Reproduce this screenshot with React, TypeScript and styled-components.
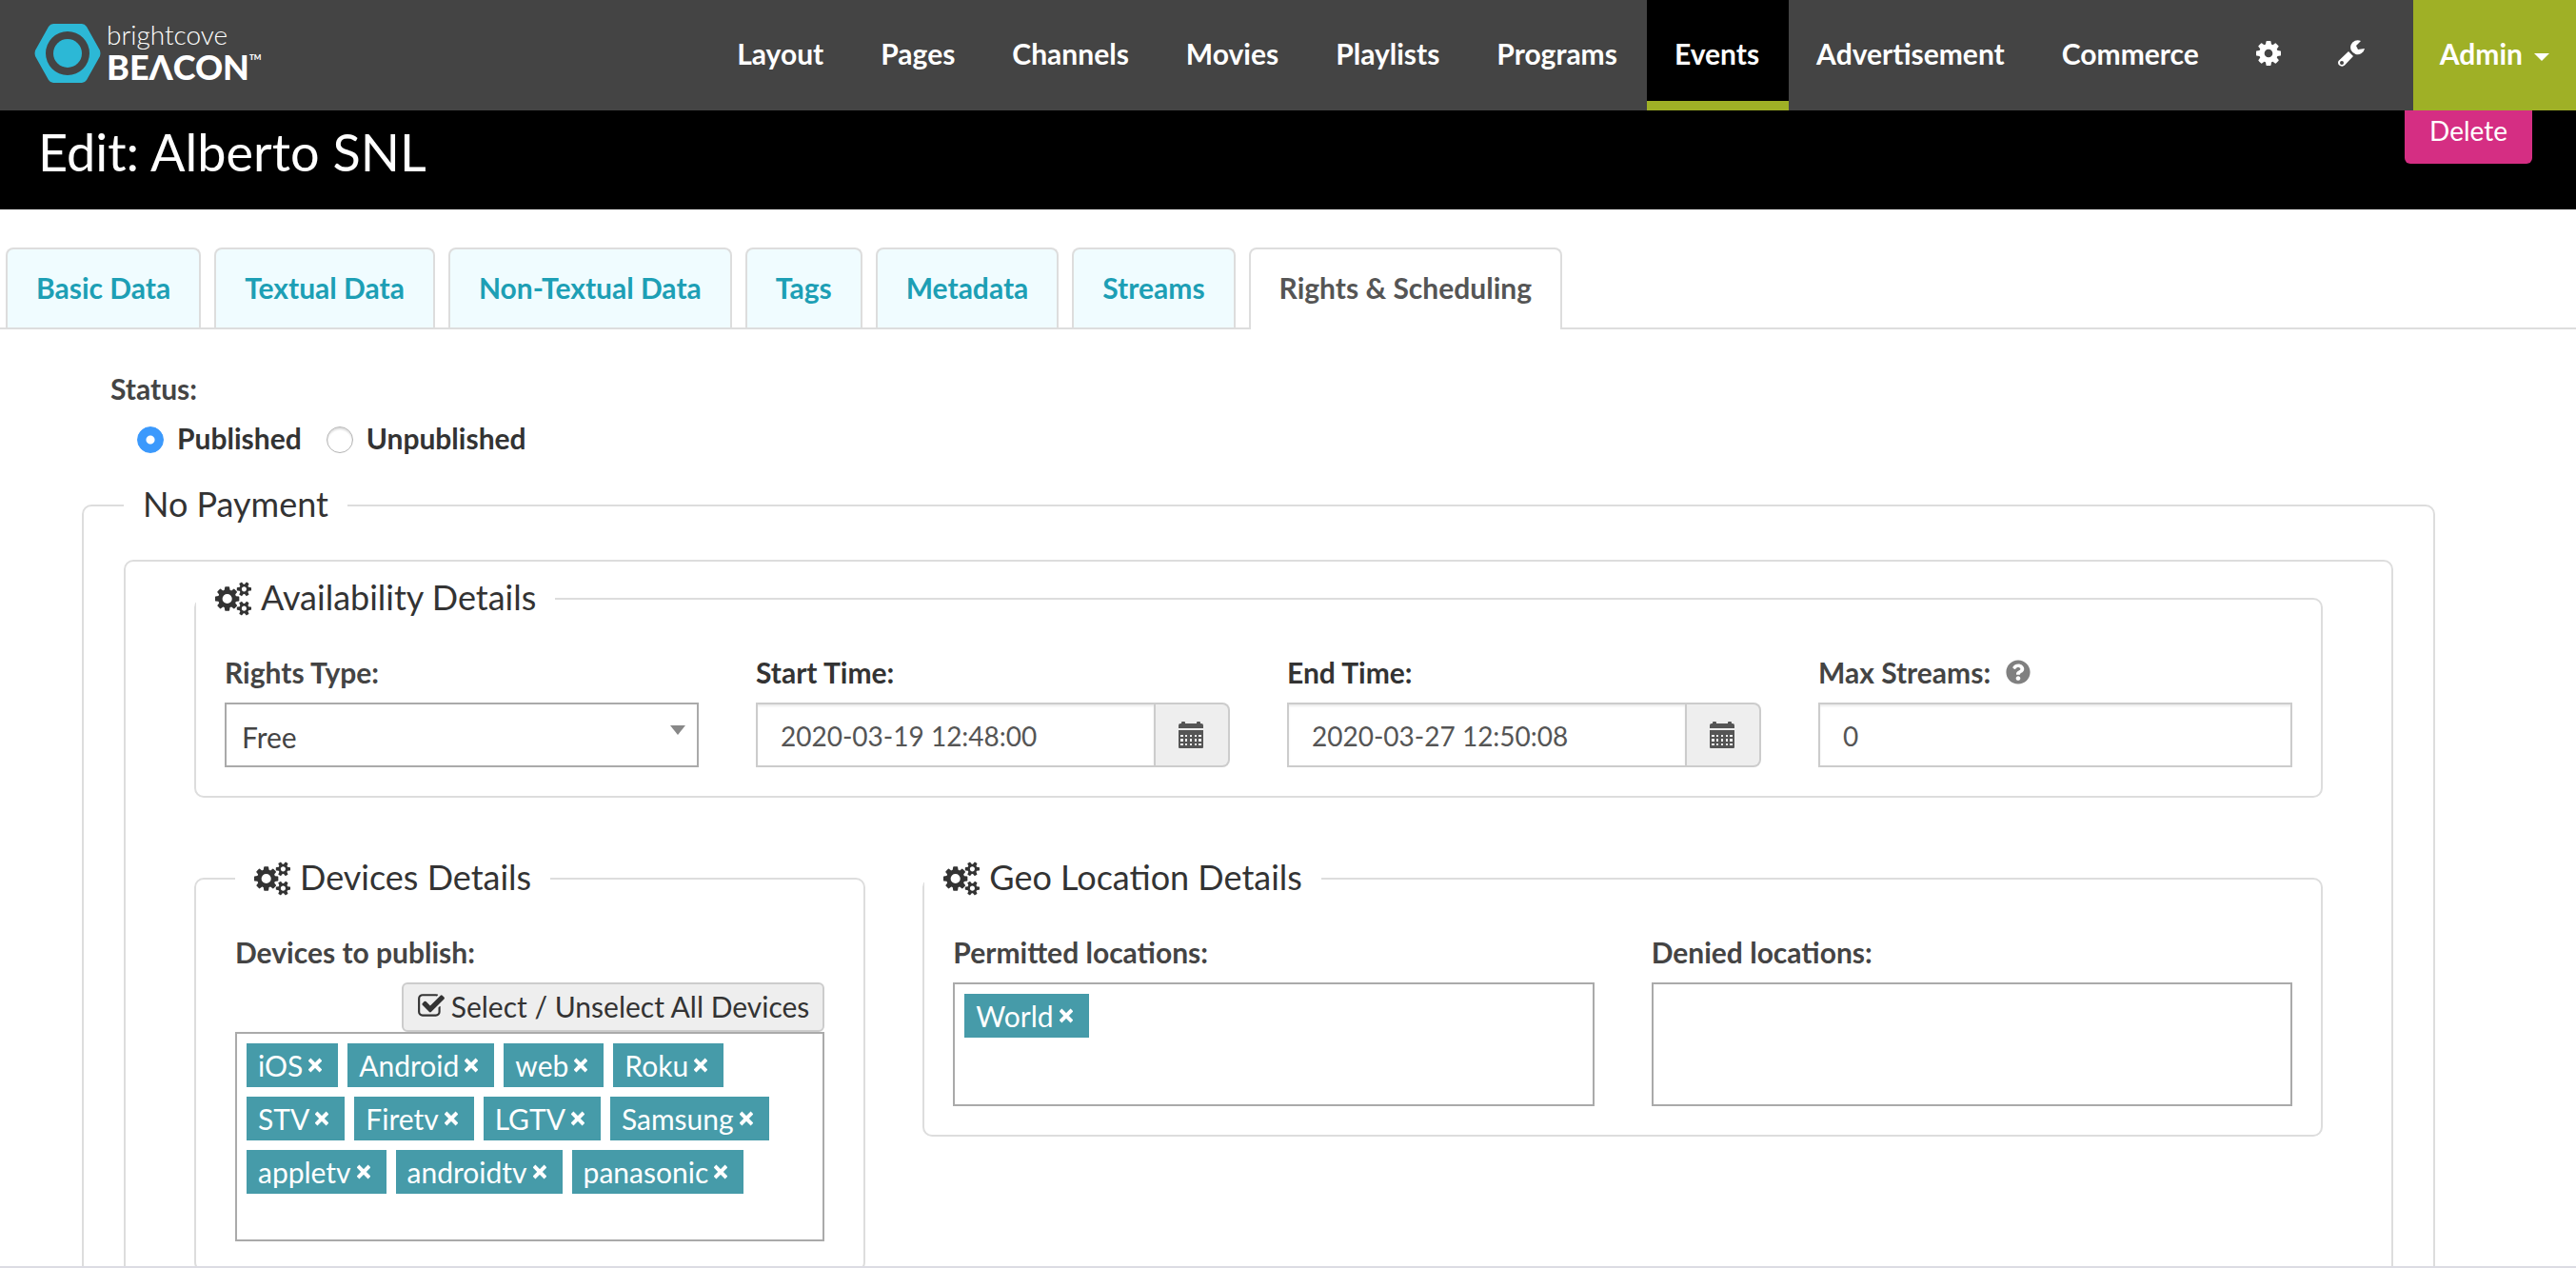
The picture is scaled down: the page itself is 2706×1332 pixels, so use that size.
import React, { useState } from "react";
import styled, { createGlobalStyle } from "styled-components";
import { FaQuestionCircle } from "react-icons/fa";

const GlobalStyle = createGlobalStyle`
  *, *::before, *::after { box-sizing: border-box; }
  body {
    margin: 0;
    background: #fff;
    color: #444;
    font-family: Lato, "Open Sans", sans-serif;
    font-size: 30px;
    line-height: 40px;
  }
  button, input, select { font: inherit; color: inherit; }
`;

const Shell = styled.div`
  display: flex;
  flex-direction: column;
  height: 100vh;
  border-bottom: 2px solid #dcdce3;
`;

const Header = styled.header`
  display: flex;
  align-items: stretch;
  justify-content: space-between;
  flex: none;
  height: 116px;
  background: #444;
  color: #fff;
`;

const Brand = styled.a`
  display: flex;
  align-items: center;
  align-self: flex-start;
  gap: 6px;
  padding: 20px 0 0 36px;
  color: #fff;
  text-decoration: none;
`;

const BrandText = styled.span`
  display: flex;
  flex-direction: column;
  padding-bottom: 4px;
`;

const BrandTop = styled.span`
  font-size: 28px;
  font-weight: 300;
  line-height: 32px;
`;

const BrandName = styled.span`
  display: flex;
  font-size: 36px;
  font-weight: 900;
  line-height: 36px;
`;

const TradeMark = styled.span`
  font-size: 8px;
  line-height: 16px;
`;

const Nav = styled.nav`
  display: flex;
`;

const NavLink = styled.a<{ $active?: boolean }>`
  display: flex;
  align-items: center;
  padding: 0 31px 0 29px;
  border-bottom: 10px solid ${(p) => (p.$active ? "#9fb026" : "transparent")};
  border-top: 6px solid transparent;
  background: ${(p) => (p.$active ? "#000" : "transparent")};
  color: #fff;
  font-weight: 700;
  text-decoration: none;
`;

const AdminButton = styled.button`
  display: flex;
  align-items: center;
  gap: 12px;
  margin-left: 20px;
  padding: 0 28px 4px;
  border: 0;
  background: #9fb026;
  color: #fff;
  font-weight: 700;
`;

const Caret = styled.span`
  margin-top: 8px;
  border: 8px solid transparent;
  border-top-color: currentColor;
  border-bottom: 0;
`;

const Scroller = styled.div`
  flex: 1;
  min-height: 0;
  overflow-x: hidden;
  overflow-y: auto;
  scrollbar-width: none;
`;

const TitleBar = styled.div`
  display: flex;
  justify-content: space-between;
  align-items: flex-start;
  height: 104px;
  padding: 0 46px 0 40px;
  background: #000;
  color: #fff;
`;

const Title = styled.h1`
  margin: 0;
  padding-top: 12px;
  font-size: 54px;
  font-weight: 400;
  line-height: 64px;
`;

const DeleteButton = styled.button`
  padding: 0 26px 14px;
  border: 0;
  border-radius: 0 0 6px 6px;
  background: #d52e83;
  color: #fff;
  font-size: 28px;
  line-height: 42px;
`;

const Tabs = styled.div`
  display: flex;
  gap: 14px;
  margin-top: 40px;
  padding: 0 6px;
  border-bottom: 2px solid #ddd;
`;

const Tab = styled.button<{ $active?: boolean }>`
  height: ${(p) => (p.$active ? 86 : 84)}px;
  margin-bottom: ${(p) => (p.$active ? -2 : 0)}px;
  padding: 0 30px ${(p) => (p.$active ? 4 : 2)}px;
  border: 2px solid #ddd;
  border-bottom: 0;
  border-radius: 8px 8px 0 0;
  background: ${(p) => (p.$active ? "#fff" : "#f0fcff")};
  color: ${(p) => (p.$active ? "#555" : "#1d9fb5")};
  font-weight: 700;
`;

const Form = styled.form`
  padding: 42px 148px 60px 86px;
`;

const Status = styled.div`
  padding-left: 30px;
`;

const StatusLabel = styled.div`
  font-weight: 700;
`;

const RadioRow = styled.div`
  display: flex;
  gap: 26px;
  padding: 14px 0 0 28px;
`;

const RadioLabel = styled.label`
  display: flex;
  align-items: center;
  gap: 14px;
  height: 40px;
  color: #333;
  font-weight: 700;
`;

const RadioText = styled.span`
  padding-bottom: 4px;
`;

const Radio = styled.input`
  appearance: none;
  width: 28px;
  height: 28px;
  margin: 0;
  border: 1px solid #b4b4b4;
  border-radius: 50%;
  background: #fff;
  box-shadow: inset 0 2px 2px #ddd;

  &:checked {
    border-color: #3b99fc;
    background: radial-gradient(circle, #fff 0 4px, #3b99fc 5px);
    box-shadow: none;
  }
`;

const Group = styled.fieldset<{ $pad: number }>`
  min-width: 0;
  margin: 0;
  padding: 0 ${(p) => p.$pad}px 30px;
  border: 2px solid #ddd;
  border-radius: 10px;
`;

const Legend = styled.legend`
  padding: 0 20px 4px;
  color: #333;
  font-size: 36px;
  line-height: 40px;
`;

const LegendRow = styled.span`
  display: flex;
  align-items: center;
  gap: 10px;
  height: 40px;

  svg { margin-top: 4px; }
`;

const Panel = styled.div`
  padding: 17px 72px 60px;
  border: 2px solid #ddd;
  border-radius: 10px;
`;

const FlushLegend = styled(Legend)`
  margin-left: -30px;
`;

const PaymentGroup = styled(Group)`
  margin-top: 27px;

  > ${Panel} { margin-top: 35px; }
`;

const Fields = styled.div<{ $columns: number }>`
  display: grid;
  grid-template-columns: repeat(${(p) => p.$columns}, minmax(0, 1fr));
  gap: 60px;
  padding-top: 35px;
`;

const Field = styled.div`
  display: flex;
  flex-direction: column;
`;

const FieldLabel = styled.label<{ $dark?: boolean }>`
  display: flex;
  align-items: center;
  gap: 16px;
  padding-bottom: 12px;
  color: ${(p) => (p.$dark ? "#333" : "#444")};
  font-weight: 700;

  svg { color: #808080; }
`;

const SelectWrap = styled.div`
  position: relative;

  &::after {
    content: "";
    position: absolute;
    top: 24px;
    right: 14px;
    border: 8px solid transparent;
    border-top: 10px solid #888;
    border-bottom: 0;
    pointer-events: none;
  }
`;

const Select = styled.select`
  appearance: none;
  width: 100%;
  height: 68px;
  padding: 4px 16px 0;
  border: 2px solid #aaa;
  border-radius: 0;
  background: #fff;
`;

const InputGroup = styled.div`
  display: flex;
`;

const Input = styled.input`
  flex: 1;
  min-width: 0;
  height: 68px;
  padding: 2px 24px 0;
  border: 2px solid #ccc;
  border-radius: 0;
  background: #fff;
  box-shadow: inset 0 2px 2px rgba(0, 0, 0, 0.075);
  color: #555;
  font-size: 28px;
`;

const Addon = styled.button`
  display: flex;
  align-items: center;
  justify-content: center;
  width: 78px;
  padding: 0 2px 0 0;
  border: 2px solid #ccc;
  border-left: 0;
  border-radius: 0 8px 8px 0;
  background: #eee;
  color: #555;
`;

const DetailRow = styled.div`
  display: grid;
  grid-template-columns: repeat(12, minmax(0, 1fr));
  align-items: start;
  column-gap: 60px;
  padding-top: 63px;
`;

const Cell = styled.div<{ $span: number }>`
  grid-column: span ${(p) => p.$span};
`;

const SelectAll = styled.button`
  display: flex;
  align-items: center;
  align-self: flex-end;
  gap: 6px;
  height: 52px;
  padding: 0 14px 2px;
  border: 2px solid #ccc;
  border-radius: 6px;
  background: #eee;
  color: #333;
`;

const ChipBox = styled.div<{ $rows: number }>`
  display: flex;
  flex-wrap: wrap;
  align-content: flex-start;
  gap: 10px;
  min-height: ${(p) => (p.$rows > 1 ? 220 : 130)}px;
  padding: 10px;
  border: 2px solid #aaa;
`;

const Chip = styled.span`
  display: flex;
  align-items: center;
  gap: 6px;
  height: 46px;
  padding: 0 17px 0 12px;
  background: #469ba9;
  color: #fff;
`;

const ChipRemove = styled.button`
  display: flex;
  padding: 0;
  border: 0;
  background: none;
`;

const CogsIcon = () => (
  <svg width="38" height="36" viewBox="0 0 1920 1792" fill="currentColor" aria-hidden="true">
    <path d="M896 896q0-106-75-181t-181-75-181 75-75 181 75 181 181 75 181-75 75-181zm768 512q0-52-38-90t-90-38-90 38-38 90q0 53 37.500 90.500t90.500 37.500 90.500-37.500 37.500-90.500zm0-1024q0-52-38-90t-90-38-90 38-38 90q0 53 37.500 90.500t90.500 37.500 90.500-37.500 37.500-90.500zm-384 421v185q0 10-7 19.500t-16 10.500l-155 24q-11 35-32 76 34 48 90 115 7 11 7 20 0 12-7 19-23 30-82.500 89.500t-78.500 59.500q-11 0-21-7l-115-90q-37 19-77 31-11 108-23 155-7 24-30 24h-186q-11 0-20-7.500t-10-17.500l-23-153q-34-10-75-31l-118 89q-7 7-20 7-11 0-21-8-144-133-144-160 0-9 7-19 10-14 41-53t47-61q-23-44-35-82l-152-24q-10-1-17-9.500t-7-19.500v-185q0-10 7-19.500t16-10.500l155-24q11-35 32-76-34-48-90-115-7-11-7-20 0-12 7-20 22-30 82-89t79-59q11 0 21 7l115 90q34-18 77-32 11-108 23-154 7-24 30-24h186q11 0 20 7.500t10 17.500l23 153q34 10 75 31l118-89q8-7 20-7 11 0 21 8 144 133 144 160 0 8-7 19-12 16-42 54t-45 60q23 48 34 82l152 23q10 2 17 10.500t7 19.500zm640 533v140q0 16-149 31-12 27-30 52 51 113 51 138 0 4-4 7-122 71-124 71-8 0-46-47t-52-68q-20 2-30 2t-30-2q-14 21-52 68t-46 47q-2 0-124-71-4-3-4-7 0-25 51-138-18-25-30-52-149-15-149-31v-140q0-16 149-31 13-29 30-52-51-113-51-138 0-4 4-7 4-2 35-20t59-34 30-16q8 0 46 46.500t52 67.500q20-2 30-2t30 2q51-71 92-112l6-2q4 0 124 70 4 3 4 7 0 25-51 138 17 23 30 52 149 15 149 31zm0-1024v140q0 16-149 31-12 27-30 52 51 113 51 138 0 4-4 7-122 71-124 71-8 0-46-47t-52-68q-20 2-30 2t-30-2q-14 21-52 68t-46 47q-2 0-124-71-4-3-4-7 0-25 51-138-18-25-30-52-149-15-149-31v-140q0-16 149-31 13-29 30-52-51-113-51-138 0-4 4-7 4-2 35-20t59-34 30-16q8 0 46 46.500t52 67.500q20-2 30-2t30 2q51-71 92-112l6-2q4 0 124 70 4 3 4 7 0 25-51 138 17 23 30 52 149 15 149 31z" />
  </svg>
);

const GearIcon = () => (
  <svg width="26" height="26" viewBox="128 128 1536 1536" fill="currentColor" aria-hidden="true">
    <path d="M1152 896q0-106-75-181t-181-75-181 75-75 181 75 181 181 75 181-75 75-181zm512-109v222q0 12-8 23t-20 13l-185 28q-19 54-39 91 35 50 107 138 10 12 10 25t-9 23q-27 37-99 108t-94 71q-12 0-26-9l-138-108q-44 23-91 38-16 136-29 186-7 28-36 28h-222q-14 0-24.500-8.500t-11.500-21.500l-28-184q-49-16-90-37l-141 107q-10 9-25 9-14 0-25-11-126-114-165-168-7-10-7-23 0-12 8-23 15-21 51-66.500t54-70.500q-27-50-41-99l-183-27q-13-2-21-12.500t-8-23.500v-222q0-12 8-23t19-13l186-28q14-46 39-92-40-57-107-138-10-12-10-24 0-10 9-23 26-36 98.500-107.500t94.500-71.500q13 0 26 10l138 107q44-23 91-38 16-136 29-186 7-28 36-28h222q14 0 24.500 8.500t11.500 21.500l28 184q49 16 90 37l142-107q9-9 24-9 13 0 25 10 129 119 165 170 7 8 7 22 0 12-8 23-15 21-51 66.500t-54 70.500q26 50 41 98l183 28q13 2 21 12.500t8 23.500z" />
  </svg>
);

const WrenchIcon = () => (
  <svg width="28" height="28" viewBox="0 0 28 28" fill="currentColor" aria-hidden="true">
    <path d="M24 1l-5 5 2 4 7-1A7.500 7.500 0 1 1 24 1z" />
    <path
      fillRule="evenodd"
      d="M11 12l5 5L7 26.500q-2 2-5 .5t-1.500-5zM4 22a2 2 0 1 0 0 4a2 2 0 1 0 0-4z"
    />
  </svg>
);

const CheckIcon = () => (
  <svg width="30" height="30" viewBox="64 0 1664 1792" fill="currentColor" aria-hidden="true">
    <path d="M1472 930v318q0 119-84.500 203.500t-203.500 84.500h-832q-119 0-203.500-84.500t-84.500-203.500v-832q0-119 84.500-203.500t203.500-84.500h832q63 0 117 25 15 7 18 23 3 17-9 29l-49 49q-10 10-23 10-3 0-9-2-23-6-45-6h-832q-66 0-113 47t-47 113v832q0 66 47 113t113 47h832q66 0 113-47t47-113v-254q0-13 9-22l64-64q10-10 23-10 6 0 12 3 20 8 20 29zm231-489l-814 814q-24 24-57 24t-57-24l-430-430q-24-24-24-57t24-57l110-110q24-24 57-24t57 24l263 263 647-647q24-24 57-24t57 24l110 110q24 24 24 57t-24 57z" />
  </svg>
);

const CalendarIcon = () => (
  <svg width="26" height="28" viewBox="0 0 26 28" fill="currentColor" aria-hidden="true">
    <path d="M0 7V4q0-2 2-2h1V1q0-1 1-1h2q1 0 1 1v1h12V1q0-1 1-1h2q1 0 1 1v1h1q2 0 2 2v3z" />
    <path
      fillRule="evenodd"
      d="M0 9h26v18q0 1-1 1H1q-1 0-1-1zM2 14h3v2H2zM7 14h2v2H7zM12 14h2v2h-2zM17 14h2v2h-2zM21 14h3v2h-3zM2 18h3v3H2zM7 18h2v3H7zM12 18h2v3h-2zM17 18h2v3h-2zM21 18h3v3h-3zM2 23h3v2H2zM7 23h2v2H7zM12 23h2v2h-2zM17 23h2v2h-2zM21 23h3v2h-3z"
    />
  </svg>
);

const CrossIcon = () => (
  <svg width="14" height="16" viewBox="0 0 14 16" stroke="#fff" strokeWidth="4" aria-hidden="true">
    <path d="M1 2l12 12M13 2L1 14" />
  </svg>
);

const LogoMark = () => (
  <svg width="70" height="62" viewBox="0 0 70 62" aria-hidden="true">
    <path
      fill="#2cb8d6"
      fillRule="evenodd"
      d="M20 0h30q3 0 5 3l14 25q1 3 0 6L55 59q-2 3-5 3H20q-3 0-5-3L1 34q-1-3 0-6L15 3q2-3 5-3zM35 8a23 23 0 1 0 0 46a23 23 0 1 0 0-46z"
    />
    <circle cx="35" cy="31" r="15" fill="#2cb8d6" />
  </svg>
);

const navItems = ["Layout", "Pages", "Channels", "Movies", "Playlists", "Programs", "Events", "Advertisement", "Commerce"];
const tabItems = ["Basic Data", "Textual Data", "Non-Textual Data", "Tags", "Metadata", "Streams", "Rights & Scheduling"];
const allDevices = ["iOS", "Android", "web", "Roku", "STV", "Firetv", "LGTV", "Samsung", "appletv", "androidtv", "panasonic"];

type ChipsProps = { items: string[]; rows: number; onRemove: (item: string) => void; labelledBy: string };

const Chips = ({ items, rows, onRemove, labelledBy }: ChipsProps) => (
  <ChipBox $rows={rows} role="group" aria-labelledby={labelledBy}>
    {items.map((item) => (
      <Chip key={item}>
        {item}
        <ChipRemove type="button" aria-label={`Remove ${item}`} onClick={() => onRemove(item)}>
          <CrossIcon />
        </ChipRemove>
      </Chip>
    ))}
  </ChipBox>
);

const DateField = ({ id, label, value }: { id: string; label: string; value: string }) => (
  <Field>
    <FieldLabel $dark htmlFor={id}>{label}</FieldLabel>
    <InputGroup>
      <Input id={id} type="text" defaultValue={value} />
      <Addon type="button" aria-label={`Pick ${label}`}>
        <CalendarIcon />
      </Addon>
    </InputGroup>
  </Field>
);

export default function App() {
  const [tab, setTab] = useState("Rights & Scheduling");
  const [devices, setDevices] = useState(allDevices);
  const [permitted, setPermitted] = useState(["World"]);

  return (
    <Shell>
      <GlobalStyle />
      <Header>
        <Brand href="#">
          <LogoMark />
          <BrandText>
            <BrandTop>brightcove</BrandTop>
            <BrandName>
              BEΛCON<TradeMark>TM</TradeMark>
            </BrandName>
          </BrandText>
        </Brand>
        <Nav>
          {navItems.map((item) => (
            <NavLink key={item} href="#" $active={item === "Events"}>{item}</NavLink>
          ))}
          <NavLink href="#" aria-label="Settings"><GearIcon /></NavLink>
          <NavLink href="#" aria-label="Tools"><WrenchIcon /></NavLink>
          <AdminButton type="button">
            Admin
            <Caret />
          </AdminButton>
        </Nav>
      </Header>
      <Scroller>
        <TitleBar>
          <Title>Edit: Alberto SNL</Title>
          <DeleteButton type="button">Delete</DeleteButton>
        </TitleBar>
        <Tabs role="tablist">
          {tabItems.map((item) => (
            <Tab key={item} type="button" role="tab" aria-selected={item === tab} $active={item === tab} onClick={() => setTab(item)}>
              {item}
            </Tab>
          ))}
        </Tabs>
        <Form>
          <Status role="radiogroup" aria-labelledby="status-label">
            <StatusLabel id="status-label">Status:</StatusLabel>
            <RadioRow>
              <RadioLabel>
                <Radio type="radio" name="status" defaultChecked />
                <RadioText>Published</RadioText>
              </RadioLabel>
              <RadioLabel>
                <Radio type="radio" name="status" />
                <RadioText>Unpublished</RadioText>
              </RadioLabel>
            </RadioRow>
          </Status>
          <PaymentGroup $pad={42}>
            <Legend>No Payment</Legend>
            <Panel>
              <Group $pad={30}>
                <FlushLegend>
                  <LegendRow><CogsIcon />Availability Details</LegendRow>
                </FlushLegend>
                <Fields $columns={4}>
                  <Field>
                    <FieldLabel htmlFor="rights">Rights Type:</FieldLabel>
                    <SelectWrap>
                      <Select id="rights" defaultValue="Free">
                        <option>Free</option>
                      </Select>
                    </SelectWrap>
                  </Field>
                  <DateField id="start" label="Start Time:" value="2020-03-19 12:48:00" />
                  <DateField id="end" label="End Time:" value="2020-03-27 12:50:08" />
                  <Field>
                    <FieldLabel htmlFor="streams">
                      Max Streams:
                      <FaQuestionCircle size={26} />
                    </FieldLabel>
                    <InputGroup>
                      <Input id="streams" type="text" defaultValue="0" />
                    </InputGroup>
                  </Field>
                </Fields>
              </Group>
              <DetailRow>
                <Cell $span={4}>
                  <Group $pad={41}>
                    <Legend>
                      <LegendRow><CogsIcon />Devices Details</LegendRow>
                    </Legend>
                    <Fields $columns={1}>
                      <Field>
                        <FieldLabel as="div" id="devices-label">Devices to publish:</FieldLabel>
                        <SelectAll type="button" onClick={() => setDevices(devices.length ? [] : allDevices)}>
                          <CheckIcon />
                          Select / Unselect All Devices
                        </SelectAll>
                        <Chips
                          items={devices}
                          rows={3}
                          labelledBy="devices-label"
                          onRemove={(d) => setDevices(devices.filter((x) => x !== d))}
                        />
                      </Field>
                    </Fields>
                  </Group>
                </Cell>
                <Cell $span={8}>
                  <Group $pad={30}>
                    <FlushLegend>
                      <LegendRow><CogsIcon />Geo Location Details</LegendRow>
                    </FlushLegend>
                    <Fields $columns={2}>
                      <Field>
                        <FieldLabel as="div" id="permitted-label">Permitted locations:</FieldLabel>
                        <Chips
                          items={permitted}
                          rows={1}
                          labelledBy="permitted-label"
                          onRemove={(d) => setPermitted(permitted.filter((x) => x !== d))}
                        />
                      </Field>
                      <Field>
                        <FieldLabel as="div" id="denied-label">Denied locations:</FieldLabel>
                        <Chips items={[]} rows={1} labelledBy="denied-label" onRemove={() => undefined} />
                      </Field>
                    </Fields>
                  </Group>
                </Cell>
              </DetailRow>
            </Panel>
          </PaymentGroup>
        </Form>
      </Scroller>
    </Shell>
  );
}
